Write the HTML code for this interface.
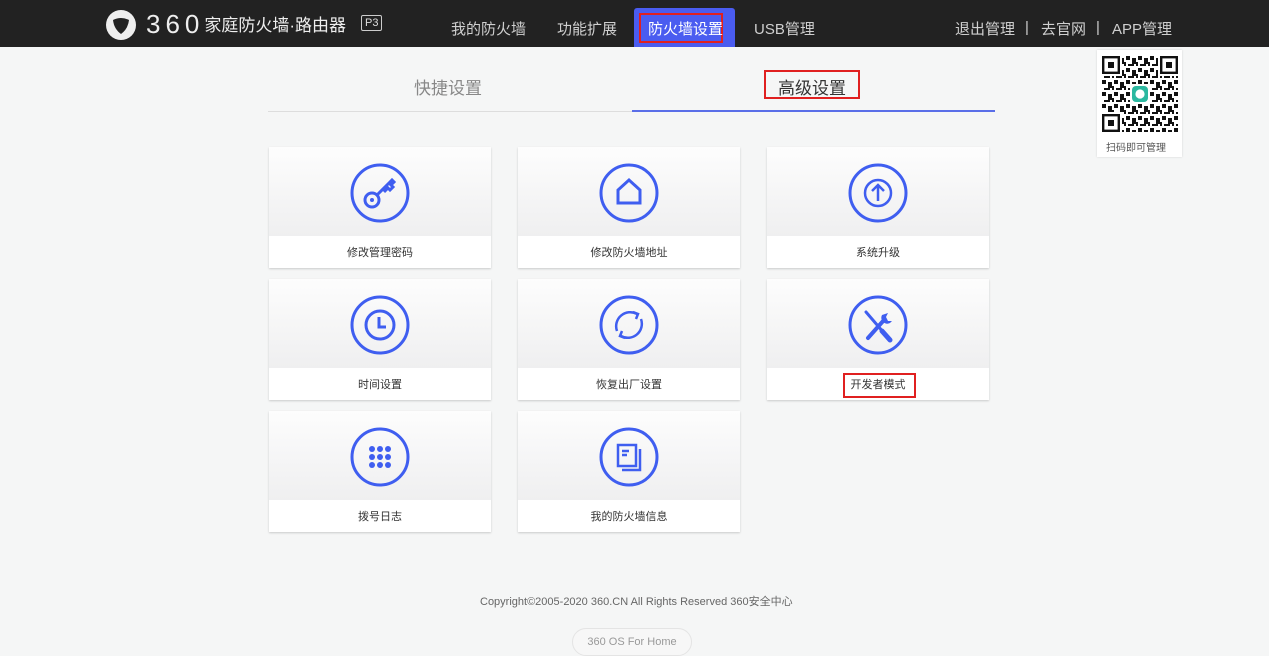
<!DOCTYPE html>
<html><head><meta charset="utf-8">
<style>
*{margin:0;padding:0;box-sizing:border-box}
body{width:1269px;height:656px;background:#f5f6f6;font-family:"Liberation Sans","Noto Sans CJK SC",sans-serif;position:relative;overflow:hidden}
.hdr{position:absolute;left:0;top:0;width:1269px;height:47px;background:#222}
.abs{position:absolute;white-space:nowrap}
.nav{color:#cfcfcf;font-size:15px;top:18px}
.card{position:absolute;width:222px;height:121px;background:#fff;box-shadow:0 1px 2px rgba(0,0,0,.18)}
.card .top{height:89px;background:linear-gradient(#fdfdfd,#efeff0)}
.card .lb{height:32px;line-height:34px;text-align:center;font-size:11px;color:#333}
.card svg{position:absolute;left:79px;top:14px}
</style></head><body>
<div class="hdr"></div>
<svg class="abs" style="left:105px;top:9px" width="32" height="32" viewBox="0 0 32 32"><circle cx="16" cy="16" r="15" fill="#eee"/><path d="M8 11 Q16 7 24 11 Q23 20 16 25 Q9 20 8 11Z" fill="#222"/></svg>
<div class="abs" style="left:146px;top:9px;color:#eee;font-size:26px;letter-spacing:5px;line-height:30px">360<span style="font-size:17px;letter-spacing:0;vertical-align:2px">家庭防火墙·路由器</span></div>
<div class="abs" style="left:361px;top:15px;border:1px solid #ccc;color:#ddd;font-size:11px;padding:0 3px;line-height:14px;border-radius:2px">P3</div>
<div class="abs nav" style="left:451px">我的防火墙</div>
<div class="abs nav" style="left:557px">功能扩展</div>
<div class="abs" style="left:634px;top:8px;width:101px;height:39px;background:#4a5cf0;border-radius:3px 3px 0 0"></div>
<div class="abs" style="left:639px;top:13px;width:84px;height:30px;border:2px solid #e02020"></div>
<div class="abs nav" style="left:648px;color:#fff">防火墙设置</div>
<div class="abs nav" style="left:754px">USB管理</div>
<div class="abs nav" style="left:955px">退出管理</div>
<div class="abs nav" style="left:1025px;top:19px">|</div>
<div class="abs nav" style="left:1041px">去官网</div>
<div class="abs nav" style="left:1096px;top:19px">|</div>
<div class="abs nav" style="left:1112px">APP管理</div>
<div class="abs" style="left:1097px;top:50px;width:85px;height:107px;background:#fff;box-shadow:0 0 2px rgba(0,0,0,.15)"></div>
<div class="abs" style="left:1134px;top:44px;width:0;height:0;border:6px solid transparent;border-bottom-color:#fff"></div>
<svg class="abs" style="left:1102px;top:56px" width="76" height="76" viewBox="0 0 38 38">
<defs><pattern id="q" width="6" height="6" patternUnits="userSpaceOnUse"><rect x="0" y="0" width="2" height="2" fill="#111"/><rect x="3" y="1" width="2" height="3" fill="#111"/><rect x="1" y="4" width="3" height="1" fill="#111"/><rect x="5" y="3" width="1" height="2" fill="#111"/></pattern></defs>
<rect width="38" height="38" fill="url(#q)"/>
<g fill="#fff"><rect x="0" y="0" width="10" height="10"/><rect x="28" y="0" width="10" height="10"/><rect x="0" y="28" width="10" height="10"/><rect x="14" y="14" width="10" height="10"/></g>
<g fill="none" stroke="#111" stroke-width="1.2"><rect x=".6" y=".6" width="7.8" height="7.8"/><rect x="29.6" y=".6" width="7.8" height="7.8"/><rect x=".6" y="29.6" width="7.8" height="7.8"/></g>
<g fill="#111"><rect x="3" y="3" width="3" height="3"/><rect x="32" y="3" width="3" height="3"/><rect x="3" y="32" width="3" height="3"/></g>
<rect x="15" y="15" width="8" height="8" rx="2" fill="#2bb8a0"/><circle cx="19" cy="19" r="2.3" fill="#fff"/></svg>
<div class="abs" style="left:1106px;top:139px;font-size:10px;color:#555">扫码即可管理</div>

<div class="abs" style="left:414px;top:74px;font-size:17px;color:#888">快捷设置</div>
<div class="abs" style="left:778px;top:74px;font-size:17px;color:#333">高级设置</div>
<div class="abs" style="left:764px;top:70px;width:96px;height:29px;border:2px solid #e02020"></div>
<div class="abs" style="left:268px;top:111px;width:364px;height:1px;background:#ddd"></div>
<div class="abs" style="left:632px;top:110px;width:363px;height:2px;background:#5a6ee8"></div>

<div class="card" style="left:269px;top:147px"><div class="top"></div><div class="lb">修改管理密码</div>
<svg width="64" height="64" viewBox="0 0 64 64"><circle cx="32" cy="32" r="28" fill="none" stroke="#3f5ef0" stroke-width="3"/><g fill="none" stroke="#3f5ef0" stroke-width="3"><circle cx="24" cy="39" r="7"/><path d="M29 34 L41 22 L44 19 L46 21 L43 24 L45 26 L42 29 L40 27 L36 31"/></g><circle cx="24" cy="39" r="2" fill="#3f5ef0"/></svg></div>
<div class="card" style="left:518px;top:147px"><div class="top"></div><div class="lb">修改防火墙地址</div>
<svg width="64" height="64" viewBox="0 0 64 64"><circle cx="32" cy="32" r="28" fill="none" stroke="#3f5ef0" stroke-width="3"/><path d="M21 42 V29 L32 19 L43 29 V42 Z" fill="none" stroke="#3f5ef0" stroke-width="3"/></svg></div>
<div class="card" style="left:767px;top:147px"><div class="top"></div><div class="lb">系统升级</div>
<svg width="64" height="64" viewBox="0 0 64 64"><circle cx="32" cy="32" r="28" fill="none" stroke="#3f5ef0" stroke-width="3"/><circle cx="32" cy="32" r="13" fill="none" stroke="#3f5ef0" stroke-width="2.5"/><path d="M32 40 V25 M26 30 L32 24 L38 30" fill="none" stroke="#3f5ef0" stroke-width="2.5"/></svg></div>

<div class="card" style="left:269px;top:279px"><div class="top"></div><div class="lb">时间设置</div>
<svg width="64" height="64" viewBox="0 0 64 64"><circle cx="32" cy="32" r="28" fill="none" stroke="#3f5ef0" stroke-width="3"/><circle cx="32" cy="32" r="14" fill="none" stroke="#3f5ef0" stroke-width="3"/><path d="M31 24 V34 H38" fill="none" stroke="#3f5ef0" stroke-width="3"/></svg></div>
<div class="card" style="left:518px;top:279px"><div class="top"></div><div class="lb">恢复出厂设置</div>
<svg width="64" height="64" viewBox="0 0 64 64"><circle cx="32" cy="32" r="28" fill="none" stroke="#3f5ef0" stroke-width="3"/><g fill="none" stroke="#3f5ef0" stroke-width="2.5"><path d="M40 21 A14 14 0 0 0 20 38"/><path d="M24 43 A14 14 0 0 0 44 26"/><path d="M36 19 L41 21 L39 26"/><path d="M28 45 L23 43 L25 38"/></g></svg></div>
<div class="card" style="left:767px;top:279px"><div class="top"></div><div class="lb">开发者模式</div>
<svg width="64" height="64" viewBox="0 0 64 64"><circle cx="32" cy="32" r="28" fill="none" stroke="#3f5ef0" stroke-width="3"/><g stroke="#3f5ef0" stroke-linecap="round"><path d="M20 19 L38 40" stroke-width="3"/><path d="M36 38 L44 47" stroke-width="5"/><path d="M22 45 L38 27" stroke-width="4"/></g><path d="M36 22 A6 6 0 0 0 44 30 L46 28 L42 28 L40 24 L42 20 Z" fill="#3f5ef0"/></svg></div>
<div class="abs" style="left:843px;top:373px;width:73px;height:25px;border:2px solid #e02020"></div>

<div class="card" style="left:269px;top:411px"><div class="top"></div><div class="lb">拨号日志</div>
<svg width="64" height="64" viewBox="0 0 64 64"><circle cx="32" cy="32" r="28" fill="none" stroke="#3f5ef0" stroke-width="3"/><g fill="#3f5ef0"><circle cx="24" cy="24" r="3"/><circle cx="32" cy="24" r="3"/><circle cx="40" cy="24" r="3"/><circle cx="24" cy="32" r="3"/><circle cx="32" cy="32" r="3"/><circle cx="40" cy="32" r="3"/><circle cx="24" cy="40" r="3"/><circle cx="32" cy="40" r="3"/><circle cx="40" cy="40" r="3"/></g></svg></div>
<div class="card" style="left:518px;top:411px"><div class="top"></div><div class="lb">我的防火墙信息</div>
<svg width="64" height="64" viewBox="0 0 64 64"><circle cx="32" cy="32" r="28" fill="none" stroke="#3f5ef0" stroke-width="3"/><g fill="none" stroke="#3f5ef0" stroke-width="2.5"><rect x="21" y="20" width="18" height="21"/><path d="M43 24 V45 H25"/><path d="M25 26 H32 M25 30 H30"/></g></svg></div>

<div class="abs" style="left:480px;top:593px;font-size:11px;color:#666">Copyright©2005-2020 360.CN All Rights Reserved 360安全中心</div>
<div class="abs" style="left:572px;top:628px;width:120px;height:28px;border:1px solid #e4e4e4;border-radius:14px;background:#f7f7f7;text-align:center;line-height:27px;font-size:11px;color:#999">360 OS For Home</div>
</body></html>
